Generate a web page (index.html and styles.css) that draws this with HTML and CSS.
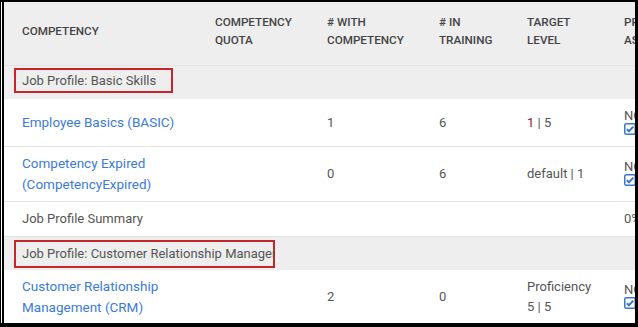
FILE: index.html
```html
<!DOCTYPE html>
<html>
<head>
<meta charset="utf-8">
<link rel="stylesheet" href="styles.css">
</head>
<body>
<div class="frame">
  <div class="frame-inner">
    <div class="viewport">
      <table class="grid">
        <colgroup>
          <col class="c1"><col class="c2"><col class="c3"><col class="c4"><col class="c5"><col class="c6">
        </colgroup>
        <thead>
          <tr class="head">
            <th>Competency</th>
            <th>Competency<br>Quota</th>
            <th># With<br>Competency</th>
            <th># In<br>Training</th>
            <th>Target<br>Level</th>
            <th>Profile<br>Assigned</th>
          </tr>
        </thead>
        <tbody>
          <tr class="group g1">
            <td colspan="6"><span class="hl hl-basic">Job Profile: Basic Skills</span></td>
          </tr>
          <tr class="row r-basic">
            <td><a class="link">Employee Basics (BASIC)</a></td>
            <td></td>
            <td>1</td>
            <td>6</td>
            <td><span class="red">1</span> | 5</td>
            <td class="status">NOT<br><span class="cb"><svg width="12" height="12" viewBox="0 0 12 12"><rect x="0.75" y="0.75" width="10.5" height="10.5" rx="1.5" fill="#fff" stroke="#3a78c9" stroke-width="1.5"/><path d="M2.8 6.2 L5 8.3 L9.3 3.6" fill="none" stroke="#3a78c9" stroke-width="2"/></svg></span></td>
          </tr>
          <tr class="row r-exp">
            <td><a class="link">Competency Expired<br>(CompetencyExpired)</a></td>
            <td></td>
            <td>0</td>
            <td>6</td>
            <td>default | 1</td>
            <td class="status">NOT<br><span class="cb"><svg width="12" height="12" viewBox="0 0 12 12"><rect x="0.75" y="0.75" width="10.5" height="10.5" rx="1.5" fill="#fff" stroke="#3a78c9" stroke-width="1.5"/><path d="M2.8 6.2 L5 8.3 L9.3 3.6" fill="none" stroke="#3a78c9" stroke-width="2"/></svg></span></td>
          </tr>
          <tr class="row r-sum">
            <td>Job Profile Summary</td>
            <td></td>
            <td></td>
            <td></td>
            <td></td>
            <td>0%</td>
          </tr>
          <tr class="group g2">
            <td colspan="6"><span class="hl hl-crm"><span class="hl-text">Job Profile: Customer Relationship Management</span></span></td>
          </tr>
          <tr class="row r-crm">
            <td><a class="link">Customer Relationship<br>Management (CRM)</a></td>
            <td></td>
            <td>2</td>
            <td>0</td>
            <td>Proficiency<br>5 | 5</td>
            <td class="status">NOT<br><span class="cb"><svg width="12" height="12" viewBox="0 0 12 12"><rect x="0.75" y="0.75" width="10.5" height="10.5" rx="1.5" fill="#fff" stroke="#3a78c9" stroke-width="1.5"/><path d="M2.8 6.2 L5 8.3 L9.3 3.6" fill="none" stroke="#3a78c9" stroke-width="2"/></svg></span></td>
          </tr>
        </tbody>
      </table>
    </div>
  </div>
</div>
</body>
</html>
```

FILE: styles.css
```css
html, body {
  margin: 0;
  padding: 0;
  background: #000;
}
.frame {
  width: 638px;
  height: 327px;
  box-sizing: border-box;
  border-style: solid;
  border-color: #000;
  border-width: 2px 3px 4px 1px;
  background: #000;
}
.frame-inner {
  height: 100%;
  border-left: 1px solid #fff;
  box-sizing: border-box;
}
.viewport {
  height: 100%;
  margin-left: 2px;
  overflow: hidden;
  background: #fff;
}
.grid {
  border-collapse: collapse;
  table-layout: fixed;
  width: 720px;
  font-family: Roboto, "Liberation Sans", sans-serif;
  font-size: 13px;
  color: #555;
}
.c1 { width: 193px; }
.c2 { width: 112px; }
.c3 { width: 112px; }
.c4 { width: 88px; }
.c5 { width: 97px; }
.c6 { width: 118px; }
.grid th, .grid td {
  padding: 0 0 0 18px;
  text-align: left;
  vertical-align: middle;
  white-space: nowrap;
}
.head th {
  height: 58px;
  padding-bottom: 5px;
  background: #eeeeee;
  font-size: 11.7px;
  font-weight: 500;
  text-transform: uppercase;
  color: #444;
  line-height: 18px;
}
.group td {
  background: #eeeeee;
  border-top: 1px solid #e4e4e4;
  padding-left: 10px;
  vertical-align: top;
}
.g1 td { height: 31px; padding-top: 2px; }
.g2 td { height: 30px; padding-top: 3px; }
.hl {
  display: block;
  box-sizing: border-box;
  border: 2px solid #c4262e;
  padding-left: 6px;
  white-space: nowrap;
  color: #555;
}
.hl-basic { width: 159px; height: 25px; line-height: 21px; }
.hl-crm { width: 261px; height: 28px; line-height: 24px; }
.hl-text {
  display: block;
  overflow: hidden;
  margin-right: -2px;
}
.row td {
  border-bottom: 1px solid #e2e2e2;
  line-height: 20px;
}
.r-basic td { height: 47px; }
.r-exp td { height: 54px; }
.r-crm td { height: 53px; border-bottom: none; }
.r-sum td { height: 34px; border-bottom: none; }
.link {
  color: #3b7bd4;
  text-decoration: none;
  font-size: 13.5px;
}
.red { color: #8c1d1d; }
.status {
  line-height: 14px !important;
}
.cb {
  display: inline-block;
  width: 12px;
  height: 12px;
  vertical-align: top;
}
.cb svg { display: block; }
```
